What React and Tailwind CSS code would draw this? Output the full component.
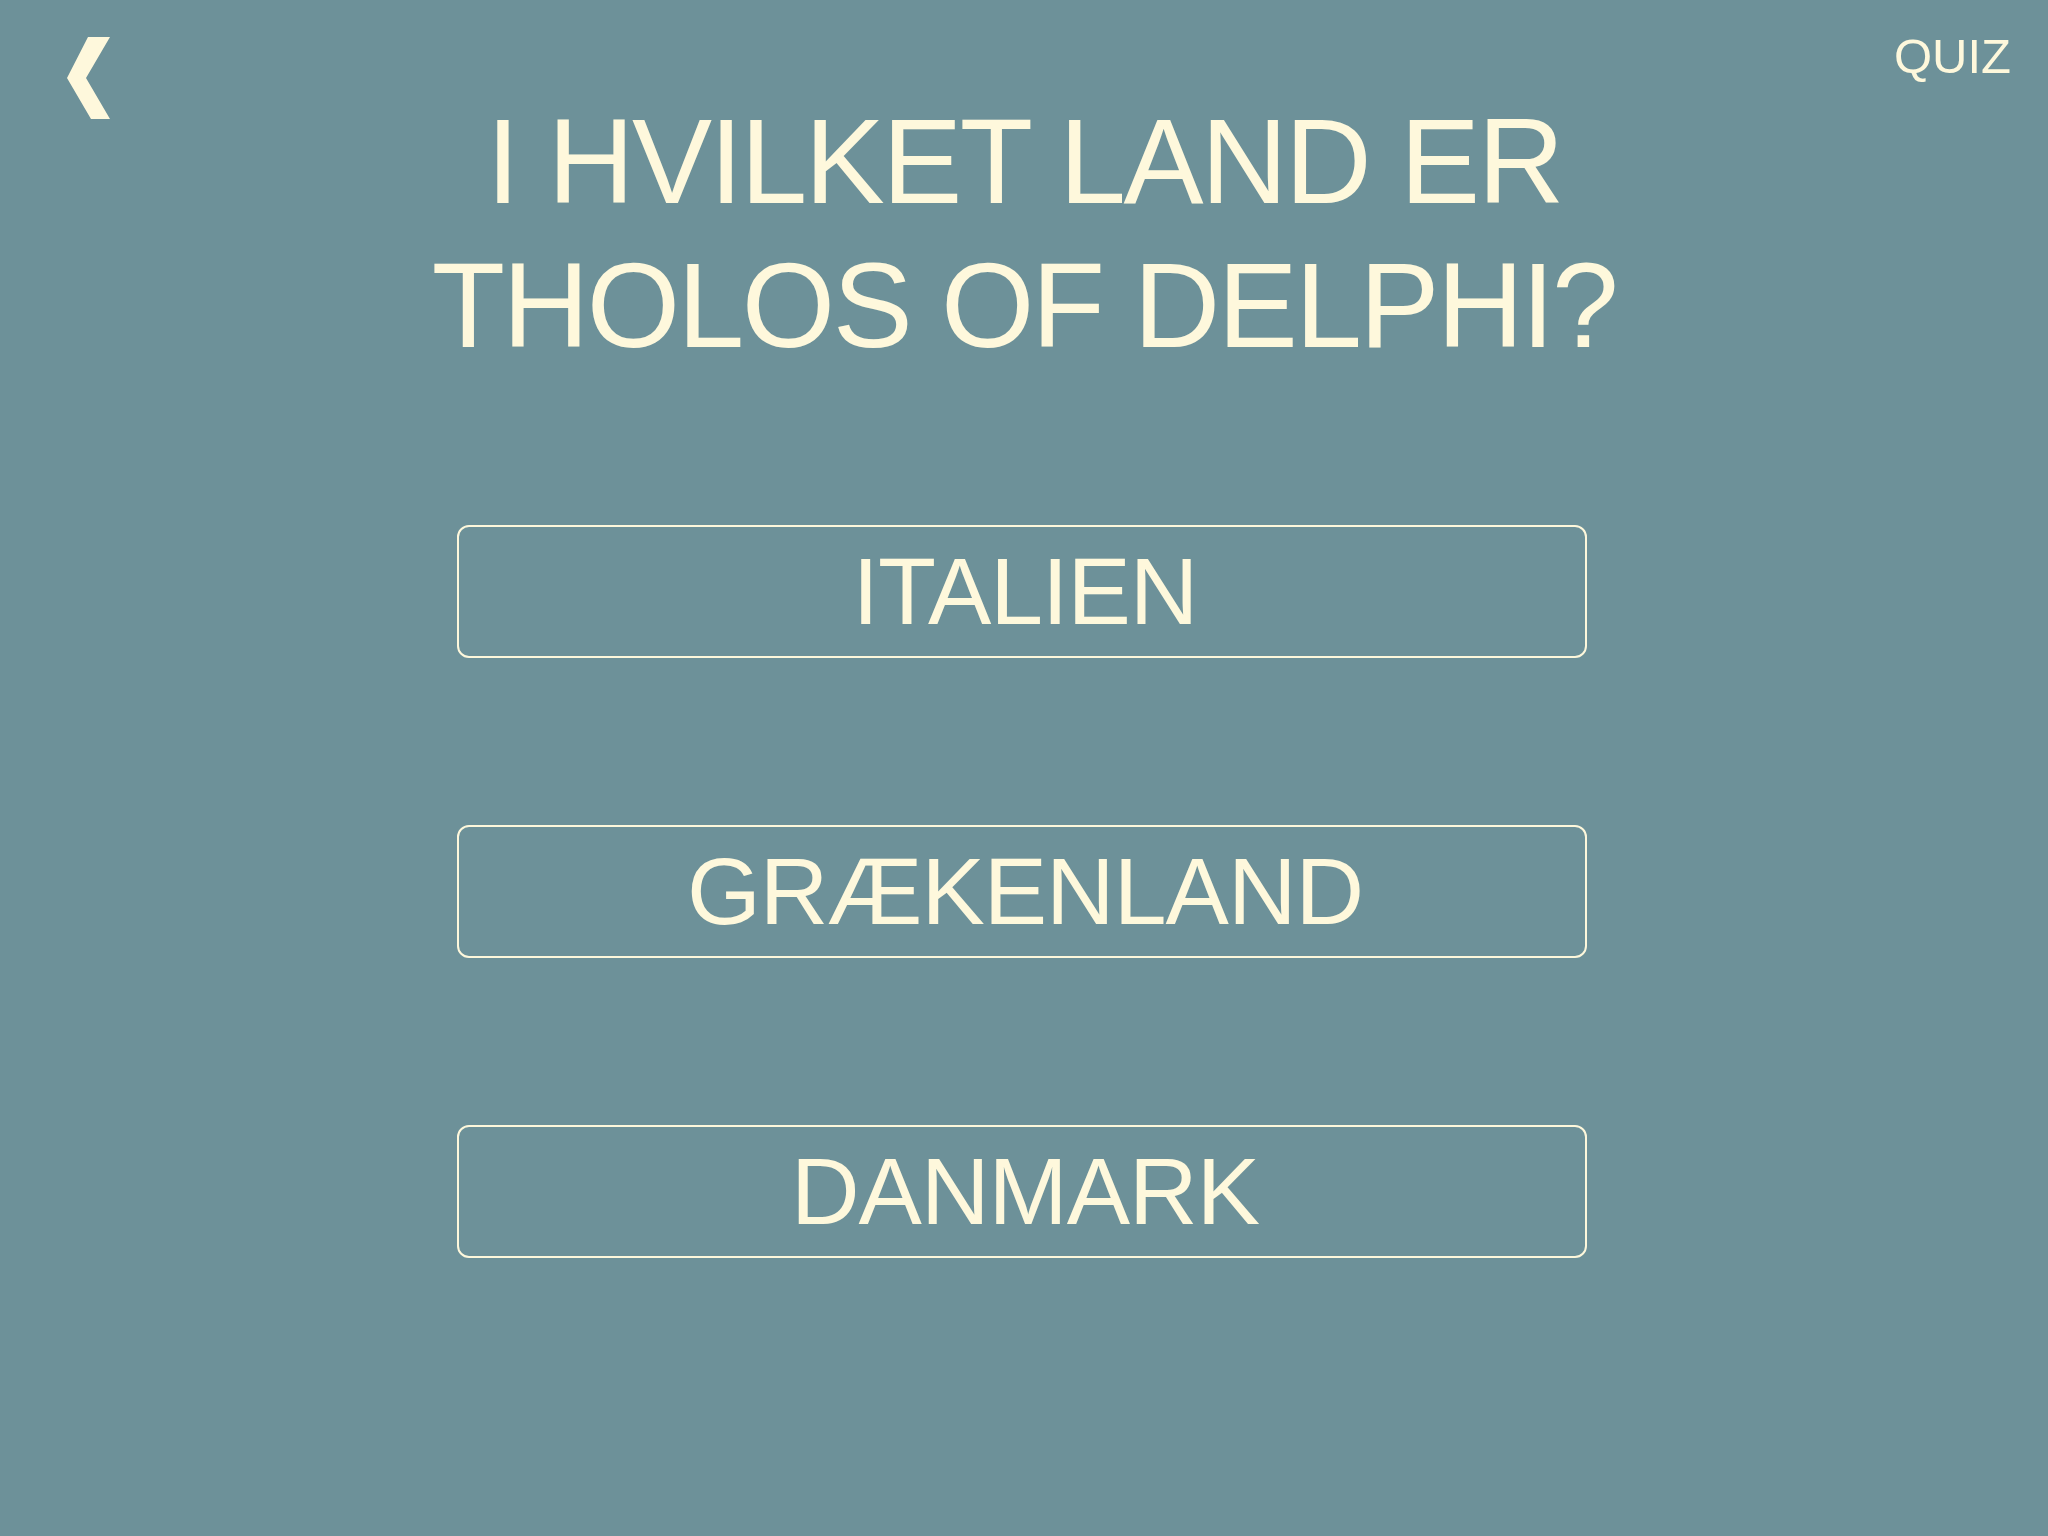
import React from "react";

const answers = ["ITALIEN", "GRÆKENLAND", "DANMARK"];

export default function App() {
  return (
    <div
      className="w-[2048px] h-[1536px] bg-[#6d9199] text-[#fef8dc] overflow-hidden"
      style={{ fontFamily: '"Liberation Sans", Arial, sans-serif' }}
    >
      <header className="h-[89px] flex justify-between items-start pl-[67px] pr-[37px] pt-[32px] box-border">
        <svg
          className="mt-[5px] shrink-0"
          width="43"
          height="83"
          viewBox="0 0 43 83"
          aria-label="Tilbage"
        >
          <polygon points="21,0 43,0 19,41 43,82 24,82 0,41" fill="#fef8dc" />
        </svg>
        <div className="text-[49px] leading-[49px] font-light">QUIZ</div>
      </header>

      <h1 className="text-center text-[120px] leading-[144px] tracking-[-2.5px] font-normal">
        I HVILKET LAND ER
        <br />
        THOLOS OF DELPHI?
      </h1>

      <div className="mt-[148px] flex flex-col gap-[167px] items-center">
        {answers.map((a) => (
          <button
            key={a}
            className="w-[1130px] h-[133px] border-2 border-[#fef8dc] rounded-[12px] flex items-center justify-center text-[95px] leading-[95px] tracking-[-1px] ml-[-4px]"
          >
            <span className="ml-[6px]">{a}</span>
          </button>
        ))}
      </div>
    </div>
  );
}
